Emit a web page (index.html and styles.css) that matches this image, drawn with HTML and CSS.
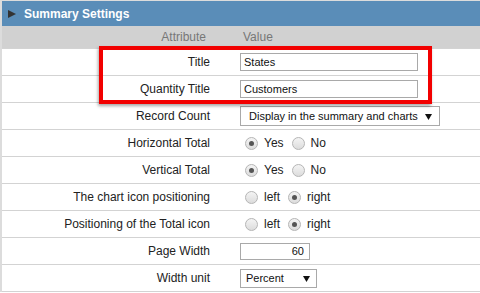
FILE: index.html
```html
<!DOCTYPE html>
<html lang="en">
<head>
    <meta charset="UTF-8">
    <title>Summary Settings</title>
    <link rel="stylesheet" href="styles.css">
</head>
<body>
    <div class="panel">
        <div class="panel-header">
            <span class="caret"></span>
            Summary Settings
        </div>

        <div class="cols">
            <div class="col-attr">Attribute</div>
            <div class="col-value">Value</div>
        </div>

        <div class="row">
            <div class="label">Title</div>
            <div class="value"><input type="text" class="text-input wide" value="States"></div>
        </div>
        <div class="row">
            <div class="label">Quantity Title</div>
            <div class="value"><input type="text" class="text-input wide" value="Customers"></div>
        </div>
        <div class="row">
            <div class="label">Record Count</div>
            <div class="value">
                <div class="select long">
                    <span>Display in the summary and charts</span>
                    <svg class="arrow" width="7" height="7" viewBox="0 0 7 7"><path d="M0 1h7L3.5 7z" fill="#111"/></svg>
                </div>
            </div>
        </div>
        <div class="row">
            <div class="label">Horizontal Total</div>
            <div class="value">
                <input type="radio" class="radio" name="htotal" checked><span class="opt">Yes</span>
                <input type="radio" class="radio" name="htotal"><span class="opt">No</span>
            </div>
        </div>
        <div class="row">
            <div class="label">Vertical Total</div>
            <div class="value">
                <input type="radio" class="radio" name="vtotal" checked><span class="opt">Yes</span>
                <input type="radio" class="radio" name="vtotal"><span class="opt">No</span>
            </div>
        </div>
        <div class="row">
            <div class="label">The chart icon positioning</div>
            <div class="value">
                <input type="radio" class="radio" name="chartpos"><span class="opt">left</span>
                <input type="radio" class="radio" name="chartpos" checked><span class="opt">right</span>
            </div>
        </div>
        <div class="row">
            <div class="label">Positioning of the Total icon</div>
            <div class="value">
                <input type="radio" class="radio" name="totalpos"><span class="opt">left</span>
                <input type="radio" class="radio" name="totalpos" checked><span class="opt">right</span>
            </div>
        </div>
        <div class="row">
            <div class="label">Page Width</div>
            <div class="value"><input type="text" class="text-input num" value="60"></div>
        </div>
        <div class="row last">
            <div class="label">Width unit</div>
            <div class="value">
                <div class="select short">
                    <span>Percent</span>
                    <svg class="arrow" width="7" height="7" viewBox="0 0 7 7"><path d="M0 1h7L3.5 7z" fill="#111"/></svg>
                </div>
            </div>
        </div>

        <!-- annotation frame around the two title fields -->
        <div class="highlight"></div>
    </div>
</body>
</html>
```

FILE: styles.css
```css
* {
    margin: 0;
    padding: 0;
    box-sizing: border-box;
}

body {
    font-family: 'Liberation Sans', Arial, sans-serif;
    font-size: 12px;
    color: #222;
    background: white;
}

.panel {
    position: relative;
    border-top: 1px solid #dcdcdc;
    border-left: 2px solid #dcdcdc;
}

.panel-header {
    height: 25px;
    background: #5a8db8;
    color: white;
    font-weight: bold;
    display: flex;
    align-items: center;
    padding-left: 6px;
    gap: 8px;
}

.caret {
    width: 0;
    height: 0;
    border-top: 4px solid transparent;
    border-bottom: 4px solid transparent;
    border-left: 8px solid #333;
}

.cols {
    height: 22px;
    background: #d1d1d1;
    color: #777;
    display: grid;
    grid-template-columns: 222px 1fr;
    align-items: center;
}

.col-attr {
    text-align: right;
    padding-right: 18px;
}

.col-value {
    padding-left: 19px;
}

.row {
    height: 27px;
    border-top: 1px solid #d3d3d3;
    display: grid;
    grid-template-columns: 222px 1fr;
    align-items: center;
}

.row.last {
    height: 28px;
    border-bottom: 1px solid #d3d3d3;
}

.label {
    text-align: right;
    padding-right: 14px;
}

.value {
    padding-left: 16px;
    display: flex;
    align-items: center;
}

.text-input {
    height: 18px;
    border: 1px solid #a9a9a9;
    font-family: inherit;
    font-size: 11px;
    color: #111;
    padding: 0 3px;
    outline: none;
}

.text-input.wide {
    width: 178px;
}

.text-input.num {
    width: 70px;
    height: 17px;
    text-align: right;
    padding-right: 5px;
}

.select {
    height: 20px;
    border: 1px solid #a9a9a9;
    display: flex;
    align-items: center;
    justify-content: space-between;
    font-size: 11px;
    white-space: nowrap;
    color: #111;
}

.select.long {
    width: 200px;
    padding: 0 7px 0 8px;
}

.select.short {
    width: 77px;
    height: 19px;
    padding: 0 6px 0 5px;
}

.radio {
    appearance: none;
    width: 13px;
    height: 13px;
    border-radius: 50%;
    border: 1px solid #b5b5b5;
    background: linear-gradient(#f4f4f4, #dcdcdc);
    margin: 0 6px 0 5px;
    position: relative;
}

.radio + .opt + .radio {
    margin-left: 8px;
}

.radio:checked::after {
    content: "";
    position: absolute;
    left: 3px;
    top: 3px;
    width: 5px;
    height: 5px;
    border-radius: 50%;
    background: #555;
}

.opt {
    color: #222;
}

.highlight {
    position: absolute;
    left: 97px;
    top: 45px;
    width: 333px;
    height: 58px;
    border: 4px solid #f20000;
    box-shadow: -1px 2px 3px rgba(0, 0, 0, 0.35);
}
```
